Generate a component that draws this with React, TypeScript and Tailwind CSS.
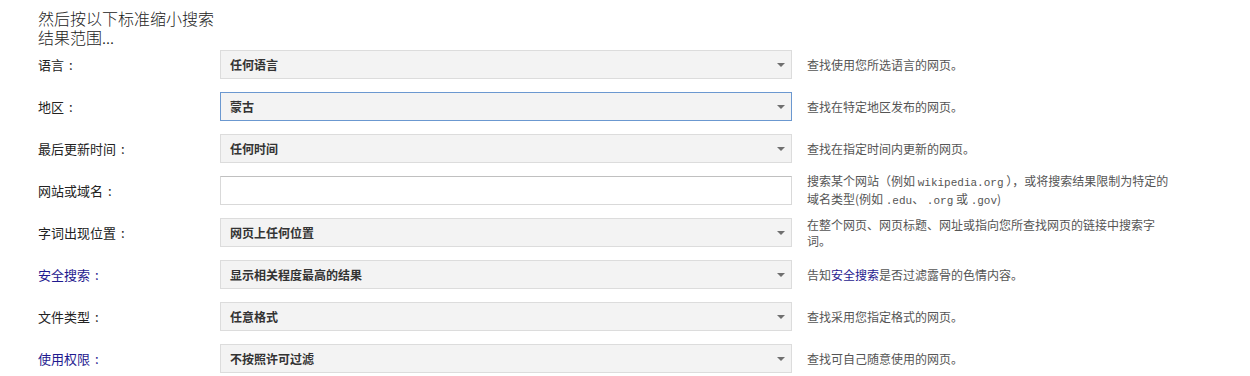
import React from "react"

const font = { fontFamily: '"Noto Sans CJK SC", "Noto Sans", sans-serif' }

type Row = {
  label: string
  link?: boolean
  value?: string
  kind?: "select" | "focused" | "input"
  desc: React.ReactNode
}

const Mono = ({ children }: { children: React.ReactNode }) => (
  <span className="font-['Liberation_Mono',monospace] text-[11px]">{children}</span>
)

const rows: Row[] = [
  { label: "语言", value: "任何语言", desc: "查找使用您所选语言的网页。" },
  { label: "地区", value: "蒙古", kind: "focused", desc: "查找在特定地区发布的网页。" },
  { label: "最后更新时间", value: "任何时间", desc: "查找在指定时间内更新的网页。" },
  {
    label: "网站或域名",
    kind: "input",
    desc: (
      <>
        <span className="whitespace-nowrap">
          搜索某个网站（例如 <Mono>wikipedia.org</Mono> ），或将搜索结果限制为特定的
        </span>
        <br />
        <span className="whitespace-nowrap">
          域名类型(例如 <Mono>.edu</Mono>、 <Mono>.org</Mono> 或 <Mono>.gov</Mono>)
        </span>
      </>
    ),
  },
  {
    label: "字词出现位置",
    value: "网页上任何位置",
    desc: (
      <>
        <span className="whitespace-nowrap">在整个网页、网页标题、网址或指向您所查找网页的链接中搜索字</span>
        <br />
        词。
      </>
    ),
  },
  {
    label: "安全搜索",
    link: true,
    value: "显示相关程度最高的结果",
    desc: (
      <>
        告知<span className="text-[#1f1a8f]">安全搜索</span>是否过滤露骨的色情内容。
      </>
    ),
  },
  { label: "文件类型", value: "任意格式", desc: "查找采用您指定格式的网页。" },
  { label: "使用权限", link: true, value: "不按照许可过滤", desc: "查找可自己随意使用的网页。" },
]

function Field({ row }: { row: Row }) {
  if (row.kind === "input") {
    return (
      <div className="h-[29px] w-[572px] bg-white border border-[#d9d9d9] border-t-[#c0c0c0]" />
    )
  }
  const focused = row.kind === "focused"
  return (
    <div
      className={`h-[29px] w-[572px] flex items-center justify-between pl-[9px] pr-[6px] bg-[#f3f3f3] border ${
        focused ? "border-[#6b98d0]" : "border-[#dcdcdc]"
      }`}
    >
      <span className="text-[12px] font-bold text-[#333]">{row.value}</span>
      <span className="w-0 h-0 border-x-[4px] border-x-transparent border-t-[4px] border-t-[#6f6f6f]" />
    </div>
  )
}

export default function App() {
  return (
    <div className="w-[1250px] h-[376px] bg-white pl-[38px] pt-[9px]" style={font}>
      <h2 className="w-[180px] text-[16px] leading-[19px] text-[#222] font-light">
        然后按以下标准缩小搜索结果范围...
      </h2>
      <div className="flex flex-col gap-[13px] mt-[3px]">
        {rows.map((row) => (
          <div key={row.label} className="flex items-center h-[29px]">
            <div className={`w-[182px] text-[13px] ${row.link ? "text-[#1f1a8f]" : "text-[#222]"}`}>
              {row.label}
              <span className="ml-[5px]">:</span>
            </div>
            <Field row={row} />
            <div className="ml-[15px] text-[12px] leading-[16px] text-[#555]">{row.desc}</div>
          </div>
        ))}
      </div>
    </div>
  )
}
